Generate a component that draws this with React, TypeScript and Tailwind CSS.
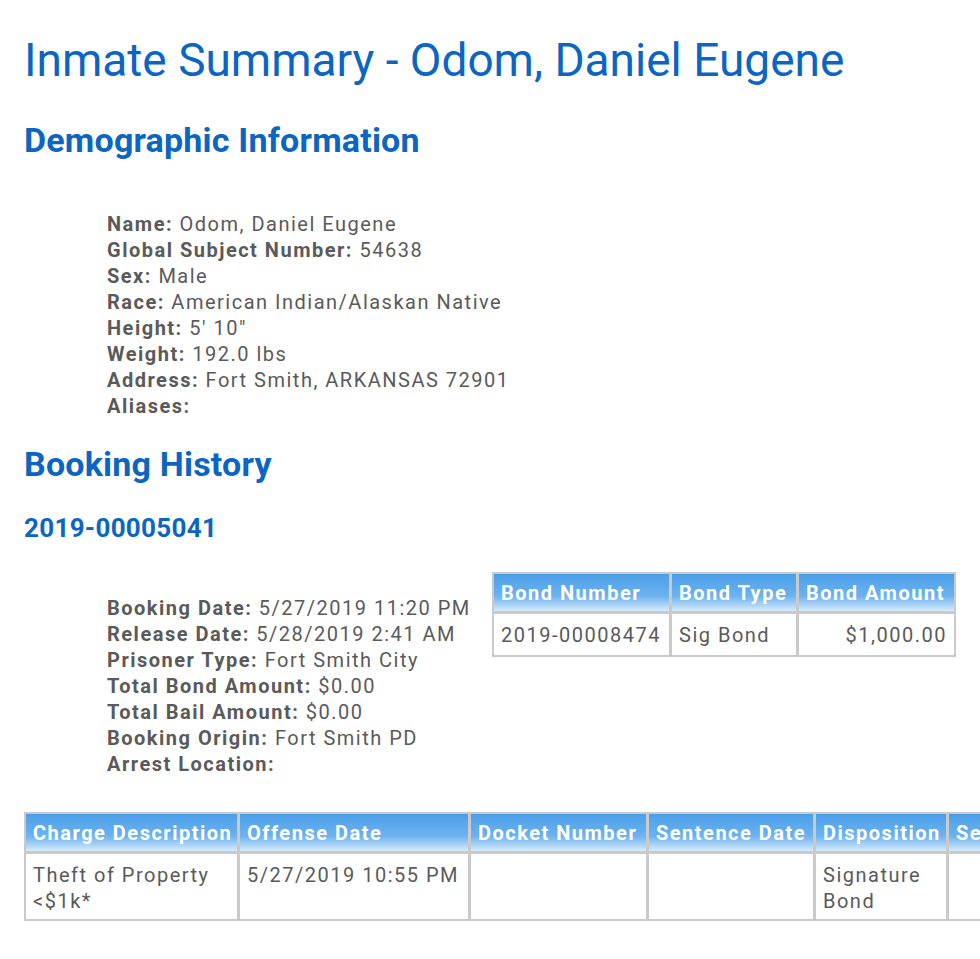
const FONT = "font-['Roboto','Liberation_Sans',sans-serif]";

const DEMOGRAPHICS: [string, string][] = [
  ["Name:", "Odom, Daniel Eugene"],
  ["Global Subject Number:", "54638"],
  ["Sex:", "Male"],
  ["Race:", "American Indian/Alaskan Native"],
  ["Height:", "5' 10\""],
  ["Weight:", "192.0 lbs"],
  ["Address:", "Fort Smith, ARKANSAS 72901"],
  ["Aliases:", ""],
];

const BOOKING: [string, string][] = [
  ["Booking Date:", "5/27/2019 11:20 PM"],
  ["Release Date:", "5/28/2019 2:41 AM"],
  ["Prisoner Type:", "Fort Smith City"],
  ["Total Bond Amount:", "$0.00"],
  ["Total Bail Amount:", "$0.00"],
  ["Booking Origin:", "Fort Smith PD"],
  ["Arrest Location:", ""],
];

const HEAD =
  "bg-[linear-gradient(to_bottom,#4a9fe9_0%,#6db2ef_60%,#d6ebfd_100%)] text-white font-bold h-[37px] flex items-center px-[7px] whitespace-nowrap overflow-hidden";

function Fields({ rows }: { rows: [string, string][] }) {
  return (
    <div className="text-[20px] leading-[26px] tracking-[1.5px] text-[#5a5a5a]">
      {rows.map(([k, v]) => (
        <div key={k} className="whitespace-nowrap">
          <span className="font-bold">{k}</span> {v}
        </div>
      ))}
    </div>
  );
}

export default function App() {
  const charges = [
    { w: "w-[211px]", head: "Charge Description", val: "Theft of Property <$1k*" },
    { w: "w-[228px]", head: "Offense Date", val: "5/27/2019 10:55 PM" },
    { w: "w-[175px]", head: "Docket Number", val: "" },
    { w: "w-[164px]", head: "Sentence Date", val: "" },
    { w: "w-[130px]", head: "Disposition", val: "Signature Bond" },
    { w: "w-[32px]", head: "Se", val: "" },
  ];

  return (
    <div className={`${FONT} w-full min-h-screen overflow-hidden bg-white`}>
      <div className="pl-[24px] pt-[32px] pb-[40px]">
        <h1 className="text-[#0b65c2] text-[46px] leading-[56px] font-normal whitespace-nowrap">
          Inmate Summary - Odom, Daniel Eugene
        </h1>

        <h2 className="mt-[32px] text-[#0b65c2] text-[34px] leading-[40px] font-bold tracking-[0.2px]">
          Demographic Information
        </h2>

        <div className="mt-[51px] pl-[83px]">
          <Fields rows={DEMOGRAPHICS} />
        </div>

        <h2 className="mt-[25px] text-[#0b65c2] text-[34px] leading-[40px] font-bold tracking-[0.2px]">
          Booking History
        </h2>

        <h3 className="mt-[28px] text-[#0b65c2] text-[26px] leading-[32px] font-bold tracking-[0.3px]">
          2019-00005041
        </h3>

        <div className="mt-[28px] flex items-start">
          <div className="pl-[83px] pt-[23px] w-[468px]">
            <Fields rows={BOOKING} />
          </div>
          <div className="grid grid-cols-[175px_124px_155px] gap-[3px] p-[2px] bg-[#cacaca] text-[20px] leading-[26px] tracking-[1.5px]">
            <div className={HEAD}>Bond Number</div>
            <div className={HEAD}>Bond Type</div>
            <div className={HEAD}>Bond Amount</div>
            <div className="bg-white h-[41px] flex items-center px-[7px] text-[#5a5a5a]">2019-00008474</div>
            <div className="bg-white h-[41px] flex items-center px-[7px] text-[#5a5a5a]">Sig Bond</div>
            <div className="bg-white h-[41px] flex items-center justify-end px-[7px] text-[#5a5a5a]">$1,000.00</div>
          </div>
        </div>

        <div className="mt-[35px] inline-flex flex-col gap-[3px] p-[2px] bg-[#cacaca] text-[20px] leading-[26px] tracking-[1.5px]">
          <div className="flex gap-[3px]">
            {charges.map((c) => (
              <div key={c.head} className={`${HEAD} ${c.w} shrink-0`}>
                {c.head}
              </div>
            ))}
          </div>
          <div className="flex gap-[3px]">
            {charges.map((c) => (
              <div
                key={c.head}
                className={`${c.w} shrink-0 bg-white h-[65px] pt-[8px] px-[7px] text-[#5a5a5a]`}
              >
                {c.val}
              </div>
            ))}
          </div>
        </div>
      </div>
    </div>
  );
}
